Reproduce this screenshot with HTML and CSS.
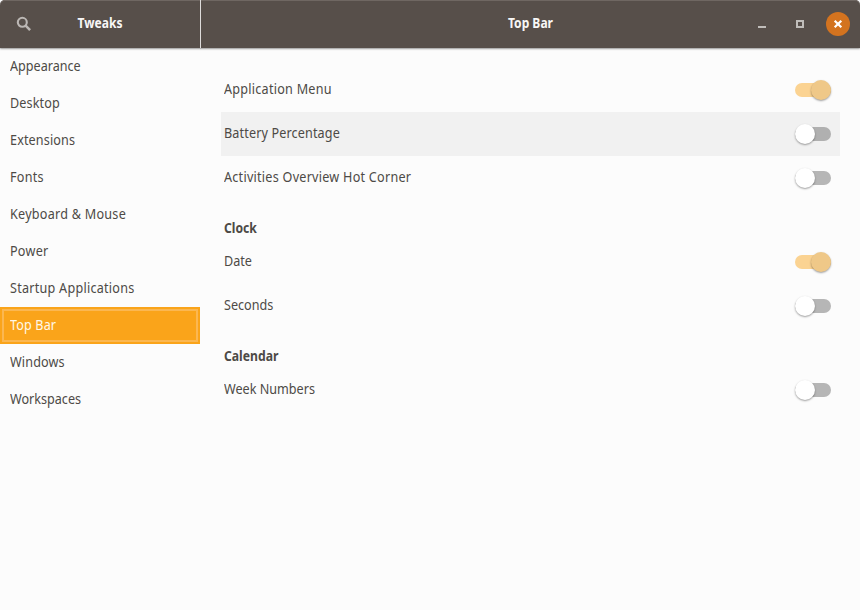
FILE: index.html
```html
<!DOCTYPE html>
<html lang="en">
<head>
<meta charset="utf-8">
<title>Tweaks</title>
<link rel="stylesheet" href="styles.css">
</head>
<body>
<div class="window">
  <header class="titlebar">
    <div class="titlebar-side">
      <svg class="search" width="16" height="16" viewBox="0 0 16 16" fill="none" stroke="#bbb7b4"><circle cx="6.3" cy="6.3" r="4.5" stroke-width="2.1"/><path d="M9.4 9.4l4.7 4.7" stroke-width="2.5"/></svg>
      <h1 class="title">Tweaks</h1>
    </div>
    <div class="titlebar-main">
      <h2 class="title">Top Bar</h2>
      <div class="controls">
        <svg width="24" height="24" viewBox="0 0 24 24"><path d="M8 14h8v2H8z" fill="#c0bdba"/></svg>
        <svg width="24" height="24" viewBox="0 0 24 24"><path d="M9 9h6v6H9z" fill="none" stroke="#c0bdba" stroke-width="2"/></svg>
        <svg width="24" height="24" viewBox="0 0 24 24"><circle cx="12" cy="12" r="12" fill="#d3731f"/><path d="M8.7 8.7l6.6 6.6M15.3 8.7l-6.6 6.6" stroke="#fff" stroke-width="2.2"/></svg>
      </div>
    </div>
  </header>
  <div class="body">
    <nav class="sidebar">
      <a class="item"><span class="label">Appearance</span></a>
      <a class="item"><span class="label loose">Desktop</span></a>
      <a class="item"><span class="label loose">Extensions</span></a>
      <a class="item"><span class="label looser">Fonts</span></a>
      <a class="item"><span class="label looser">Keyboard &amp; Mouse</span></a>
      <a class="item"><span class="label looser">Power</span></a>
      <a class="item"><span class="label looser">Startup Applications</span></a>
      <a class="item selected"><span class="label loose">Top Bar</span></a>
      <a class="item"><span class="label loose">Windows</span></a>
      <a class="item"><span class="label">Workspaces</span></a>
    </nav>
    <main class="content">
      <div class="row"><span class="label looser">Application Menu</span><i class="switch on"></i></div>
      <div class="row hover"><span class="label loose">Battery Percentage</span><i class="switch"></i></div>
      <div class="row"><span class="label looser">Activities Overview Hot Corner</span><i class="switch"></i></div>
      <h3 class="heading">Clock</h3>
      <div class="row"><span class="label">Date</span><i class="switch on"></i></div>
      <div class="row"><span class="label">Seconds</span><i class="switch"></i></div>
      <h3 class="heading">Calendar</h3>
      <div class="row"><span class="label">Week Numbers</span><i class="switch"></i></div>
    </main>
  </div>
</div>
</body>
</html>
```
FILE: styles.css
```css
* { box-sizing: border-box; }
body {
  margin: 0;
  background: #fcfcfc;
  color: #4d4a46;
  font: 14px/20px "Noto Sans", sans-serif;
}
.window { height: 610px; display: flex; flex-direction: column; }
.titlebar {
  height: 48px;
  display: flex;
  background: #574f4a;
  border-radius: 5px 5px 0 0;
  box-shadow: inset 0 1px #6f6762, 0 1px 2px rgba(0, 0, 0, .4);
  color: #f8f7f6;
}
.titlebar-side {
  width: 201px;
  display: grid;
  grid-template-columns: 32px 1fr 32px;
  align-items: center;
  border-right: 1px solid #dedcdb;
}
.search { margin-left: 16px; }
.title {
  margin: 0 0 2px;
  font-size: 14px;
  line-height: 20px;
  font-weight: 700;
  text-align: center;
  transform: scaleX(.86);
}
.titlebar-main {
  flex: 1;
  display: grid;
  grid-template-columns: 110px 1fr 110px;
  align-items: center;
}
.titlebar-main .title { grid-column: 2; }
.controls { display: flex; gap: 14px; }
.controls svg { display: block; }
.body { flex: 1; display: flex; }
.sidebar { width: 200px; }
.item { display: block; height: 37px; padding: 8px 10px; }
.label {
  display: inline-block;
  white-space: nowrap;
  transform: scaleX(.9);
  transform-origin: left;
}
.loose { letter-spacing: .15px; }
.looser { letter-spacing: .28px; }
.selected {
  padding: 6px 8px;
  border: 2px solid #faa41a;
  background: #faa41a;
  box-shadow: inset 0 0 0 2px #fbb751;
  color: #fff8e8;
}
.content { flex: 1; padding: 20px 20px 0 21px; }
.row {
  height: 44px;
  display: flex;
  align-items: center;
  justify-content: space-between;
  padding: 0 9px 0 3px;
}
.row .label { margin-bottom: 2px; }
.hover { background: #f1f1f1; }
.heading {
  margin: 18px 0 2px 3px;
  font-size: 14px;
  line-height: 20px;
  transform: scaleX(.87);
  transform-origin: left;
}
.switch {
  width: 36px;
  height: 14px;
  display: flex;
  align-items: center;
  border-radius: 7px;
  background: #b6b6b6;
}
.hover .switch { background: #b0b0b0; }
.switch::before {
  content: "";
  width: 20px;
  height: 20px;
  border-radius: 50%;
  background: #fff;
  box-shadow: 0 1px 2px rgba(0, 0, 0, .38);
}
.switch.on { justify-content: flex-end; background: #fbd392; }
.switch.on::before { background: #efc888; }
```
